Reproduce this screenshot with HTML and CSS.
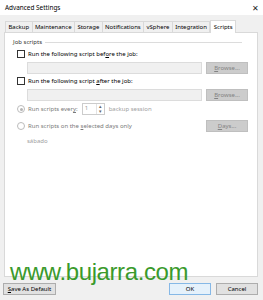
FILE: index.html
```html
<!DOCTYPE html>
<html>
<head>
    <title>Advanced Settings</title>
    <link rel="stylesheet" href="styles.css">
</head>
<body>
<div class="dialog">

    <div class="titlebar">
        <span>Advanced Settings</span>
        <span class="close">&#x2715;</span>
    </div>

    <div class="tabs">
        <div class="tab">Backup</div>
        <div class="tab">Maintenance</div>
        <div class="tab">Storage</div>
        <div class="tab">Notifications</div>
        <div class="tab">vSphere</div>
        <div class="tab">Integration</div>
        <div class="tab active">Scripts</div>
    </div>

    <div class="panel">
        <div class="group">
            <span>Job scripts</span>
            <div class="rule"></div>
        </div>

        <div class="row check-row">
            <span class="box"></span>
            <span>Run the following script bef<u>o</u>re the job:</span>
        </div>
        <div class="row field-row">
            <div class="field"></div>
            <div class="btn off"><u>B</u>rowse...</div>
        </div>

        <div class="row check-row">
            <span class="box"></span>
            <span>Run the following script <u>a</u>fter the job:</span>
        </div>
        <div class="row field-row">
            <div class="field"></div>
            <div class="btn off"><u>B</u>rowse...</div>
        </div>

        <div class="row radio-row first">
            <span class="radio checked"></span>
            <span class="dim">Run scripts ever<u>y</u>:</span>
            <div class="spin">
                <span>1</span>
                <div class="arrows"><span>&#x25B4;</span><span>&#x25BE;</span></div>
            </div>
            <span class="faint">backup session</span>
        </div>

        <div class="row radio-row second">
            <span class="radio"></span>
            <span class="dim">Run scripts on the <u>s</u>elected days only</span>
            <div class="btn off push"><u>D</u>ays...</div>
        </div>

        <div class="row days">sábado</div>
    </div>

    <div class="footer">
        <div class="btn wide"><u>S</u>ave As Default</div>
        <div class="btn ok">OK</div>
        <div class="btn">Cancel</div>
    </div>

    <div class="watermark">www.bujarra.com</div>
</div>
</body>
</html>
```

FILE: styles.css
```css
body {
    margin: 0;
    background: #f0f0f0;
    font-family: "Noto Sans", "Open Sans", sans-serif;
    font-size: 6px;
    color: #000;
}
u {
    text-decoration-thickness: 0.5px;
    text-underline-offset: 1px;
}

.dialog {
    position: relative;
    width: 263px;
    height: 300px;
    overflow: hidden;
}

.titlebar {
    height: 15px;
    background: #fff;
    display: flex;
    align-items: center;
    justify-content: space-between;
    padding: 0 4px 0 5px;
    font-size: 6.4px;
}
.close {
    font-size: 8px;
    color: #222;
}

/* tab strip */
.tabs {
    display: flex;
    align-items: flex-end;
    height: 17px;
    padding-left: 5px;
}
.tab {
    height: 10px;
    line-height: 10px;
    padding: 0 2.4px;
    border: 1px solid #d9d9d9;
    border-bottom: none;
    margin-right: -1px;
    background: #f0f0f0;
}
.tab.active {
    background: #fff;
    height: 12px;
    line-height: 12px;
    margin-bottom: -1px;
    position: relative;
    z-index: 1;
    margin-left: 1px;
}

.panel {
    margin: 0 5px 0 4px;
    height: 245px;
    background: #fff;
    border: 1px solid #d9d9d9;
    padding: 4px 9px 0 8px;
    box-sizing: border-box;
}

.row {
    display: flex;
    align-items: center;
}

.group {
    display: flex;
    align-items: center;
    height: 10px;
    gap: 3px;
    padding-right: 6px;
    color: #333;
}
.rule {
    flex: 1;
    height: 1px;
    background: #dcdcdc;
}

.check-row {
    height: 10px;
    margin: 2px 0 0 4px;
    gap: 3px;
}
.box {
    width: 6px;
    height: 6px;
    border: 1px solid #333;
    background: #fff;
}

.field-row {
    margin: 3px 0 0 14px;
    gap: 4px;
}
.field {
    width: 175px;
    height: 12px;
    box-sizing: border-box;
    background: #f0f0f0;
    border: 1px solid #dcdcdc;
}

.btn {
    width: 42px;
    height: 12px;
    box-sizing: border-box;
    border: 1px solid #adadad;
    background: #e1e1e1;
    display: flex;
    align-items: center;
    justify-content: center;
}
.btn.off {
    background: #cccccc;
    border-color: #bfbfbf;
    color: #838383;
}
.push {
    margin-left: auto;
}

.radio-row {
    margin-left: 4px;
    gap: 3px;
}
.radio-row.first {
    height: 12px;
    margin-top: 2px;
}
.radio-row.second {
    height: 12px;
    margin-top: 5px;
}
.radio {
    width: 6px;
    height: 6px;
    border: 1px solid #bcbcbc;
    border-radius: 50%;
    background: #fff;
    display: flex;
    align-items: center;
    justify-content: center;
}
.radio.checked::after {
    content: "";
    width: 3px;
    height: 3px;
    border-radius: 50%;
    background: #b5b5b5;
}
.dim {
    color: #7a7a7a;
}
.faint {
    color: #a0a0a0;
    margin-left: 1px;
}

.spin {
    width: 23px;
    height: 12px;
    box-sizing: border-box;
    border: 1px solid #cccccc;
    display: flex;
    justify-content: space-between;
    color: #9a9a9a;
    padding-left: 2px;
    margin-left: 1px;
}
.arrows {
    width: 7px;
    display: flex;
    flex-direction: column;
    border-left: 1px solid #e3e3e3;
    font-size: 5px;
    line-height: 5px;
    text-align: center;
    color: #666;
}

.days {
    height: 10px;
    margin: 4px 0 0 14px;
    color: #a0a0a0;
}

.footer {
    display: flex;
    padding: 6px 5px 0 3px;
    gap: 5px;
}
.footer .wide {
    width: 53px;
    margin-right: auto;
}
.footer .ok {
    border-color: #86b8e6;
    background: #e5f1fb;
}

.watermark {
    position: absolute;
    left: 10px;
    top: 258px;
    font-family: "Liberation Sans", sans-serif;
    font-size: 24px;
    letter-spacing: -0.4px;
    color: #3a9a2c;
}
```
